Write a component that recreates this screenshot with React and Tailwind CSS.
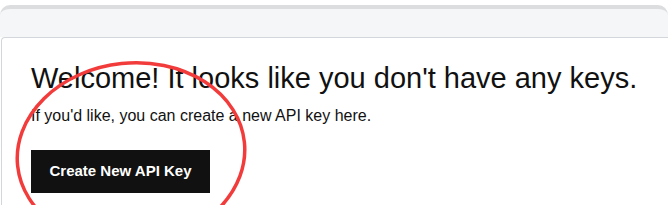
export default function App() {
    return (
        <div className="relative w-full h-[205px] overflow-hidden bg-white pt-[5px]" style={{ fontFamily: '"Liberation Sans", Arial, sans-serif' }}>
            {/* page header strip */}
            <div className="h-[32px] rounded-t-[10px] border-t-4 border-[#dcdddf] bg-[#f5f6f8]" />

            {/* card */}
            <div className="ml-[1px] h-[200px] rounded-tl-[4px] border-t border-l border-[#d3d7db] bg-white pl-[29px] pt-[22px]">
                <h1 className="text-[29px] leading-[36px] text-[#111111] whitespace-nowrap">
                    Welcome! It looks like you don't have any keys.
                </h1>
                <p className="mt-[10px] text-[16px] leading-[20px] text-[#111111] whitespace-nowrap">
                    If you'd like, you can create a new API key here.
                </p>
                <button className="mt-[24px] h-[43px] w-[179px] bg-[#111111] text-[15px] font-bold text-white">
                    Create New API Key
                </button>
            </div>

            {/* red annotation circle */}
            <svg className="absolute left-0 top-0 pointer-events-none" width="668" height="205" viewBox="0 0 668 205">
                <ellipse cx="131" cy="154" rx="114" ry="91" fill="none" stroke="#f23c3c" strokeWidth="3.5" transform="rotate(-6 131 154)" />
            </svg>
        </div>
    );
}
